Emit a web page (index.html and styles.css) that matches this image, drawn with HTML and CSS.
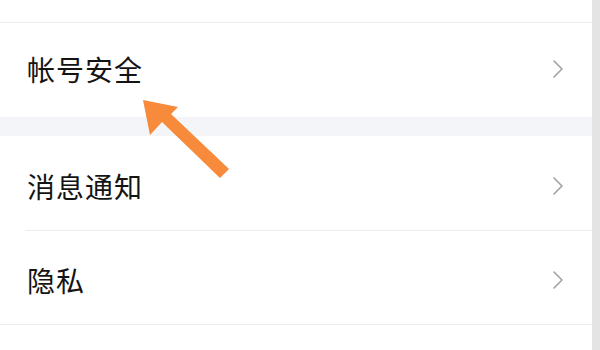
FILE: index.html
```html
<!DOCTYPE html>
<html lang="zh-CN">
<head>
    <meta charset="UTF-8">
    <meta name="viewport" content="width=device-width, initial-scale=1.0">
    <title>设置</title>
    <link rel="stylesheet" href="styles.css">
</head>
<body>
    <div class="screen">
        <div class="settings">
            <div class="top-gap"></div>

            <div class="group">
                <div class="item item--first">
                    <span class="item__label">帐号安全</span>
                    <svg class="item__chevron" viewBox="0 0 12 20" width="12" height="20"><path d="M2 2 L10 10 L2 18" fill="none" stroke="#a0a0a0" stroke-width="1.6" stroke-linecap="round" stroke-linejoin="round"/></svg>
                </div>
            </div>

            <div class="band"></div>

            <div class="group">
                <div class="item item--second">
                    <span class="item__label">消息通知</span>
                    <svg class="item__chevron" viewBox="0 0 12 20" width="12" height="20"><path d="M2 2 L10 10 L2 18" fill="none" stroke="#a0a0a0" stroke-width="1.6" stroke-linecap="round" stroke-linejoin="round"/></svg>
                </div>
                <div class="item item--last">
                    <span class="item__label">隐私</span>
                    <svg class="item__chevron" viewBox="0 0 12 20" width="12" height="20"><path d="M2 2 L10 10 L2 18" fill="none" stroke="#a0a0a0" stroke-width="1.6" stroke-linecap="round" stroke-linejoin="round"/></svg>
                </div>
            </div>

            <!-- pointer drawn over the list -->
            <svg class="pointer" viewBox="0 0 600 350" width="600" height="350">
                <polygon points="143,100 178,107 171,114 229,169 220,178 162,122 150,135" fill="#f78a3b"/>
            </svg>
        </div>
        <div class="scrollbar"></div>
    </div>
</body>
</html>
```

FILE: styles.css
```css
body {
    margin: 0;
    padding: 0;
    width: 600px;
    height: 350px;
    overflow: hidden;
    background: #ffffff;
    font-family: "Noto Sans CJK SC", "Noto Sans", sans-serif;
}

.screen {
    display: flex;
    height: 350px;
}

.settings {
    position: relative;
    flex: 1;
    background: #ffffff;
}

.scrollbar {
    width: 8px;
    background: #e4e4e4;
}

.top-gap {
    height: 22px;
    border-bottom: 1px solid #ededed;
}

.band {
    height: 19px;
    background: #f4f5f9;
}

.group {
    background: #ffffff;
}

.item {
    display: flex;
    align-items: center;
    justify-content: space-between;
    padding: 0 28px 0 27px;
    box-sizing: border-box;
}

.item--first { height: 94px; padding-bottom: 2px; }

.item--second {
    position: relative;
    height: 95px;
    padding-top: 4px;
}

.item--second::after {
    content: "";
    position: absolute;
    left: 25px;
    right: 0;
    bottom: 0;
    height: 1px;
    background: #ededed;
}

.item--last {
    height: 94px;
    padding-top: 4px;
    border-bottom: 1px solid #ececec;
}

.item__label {
    font-size: 28px;
    color: #141414;
    letter-spacing: 1px;
}

.item__chevron {
    display: block;
}

.pointer {
    position: absolute;
    left: 0;
    top: 0;
    pointer-events: none;
}
```
